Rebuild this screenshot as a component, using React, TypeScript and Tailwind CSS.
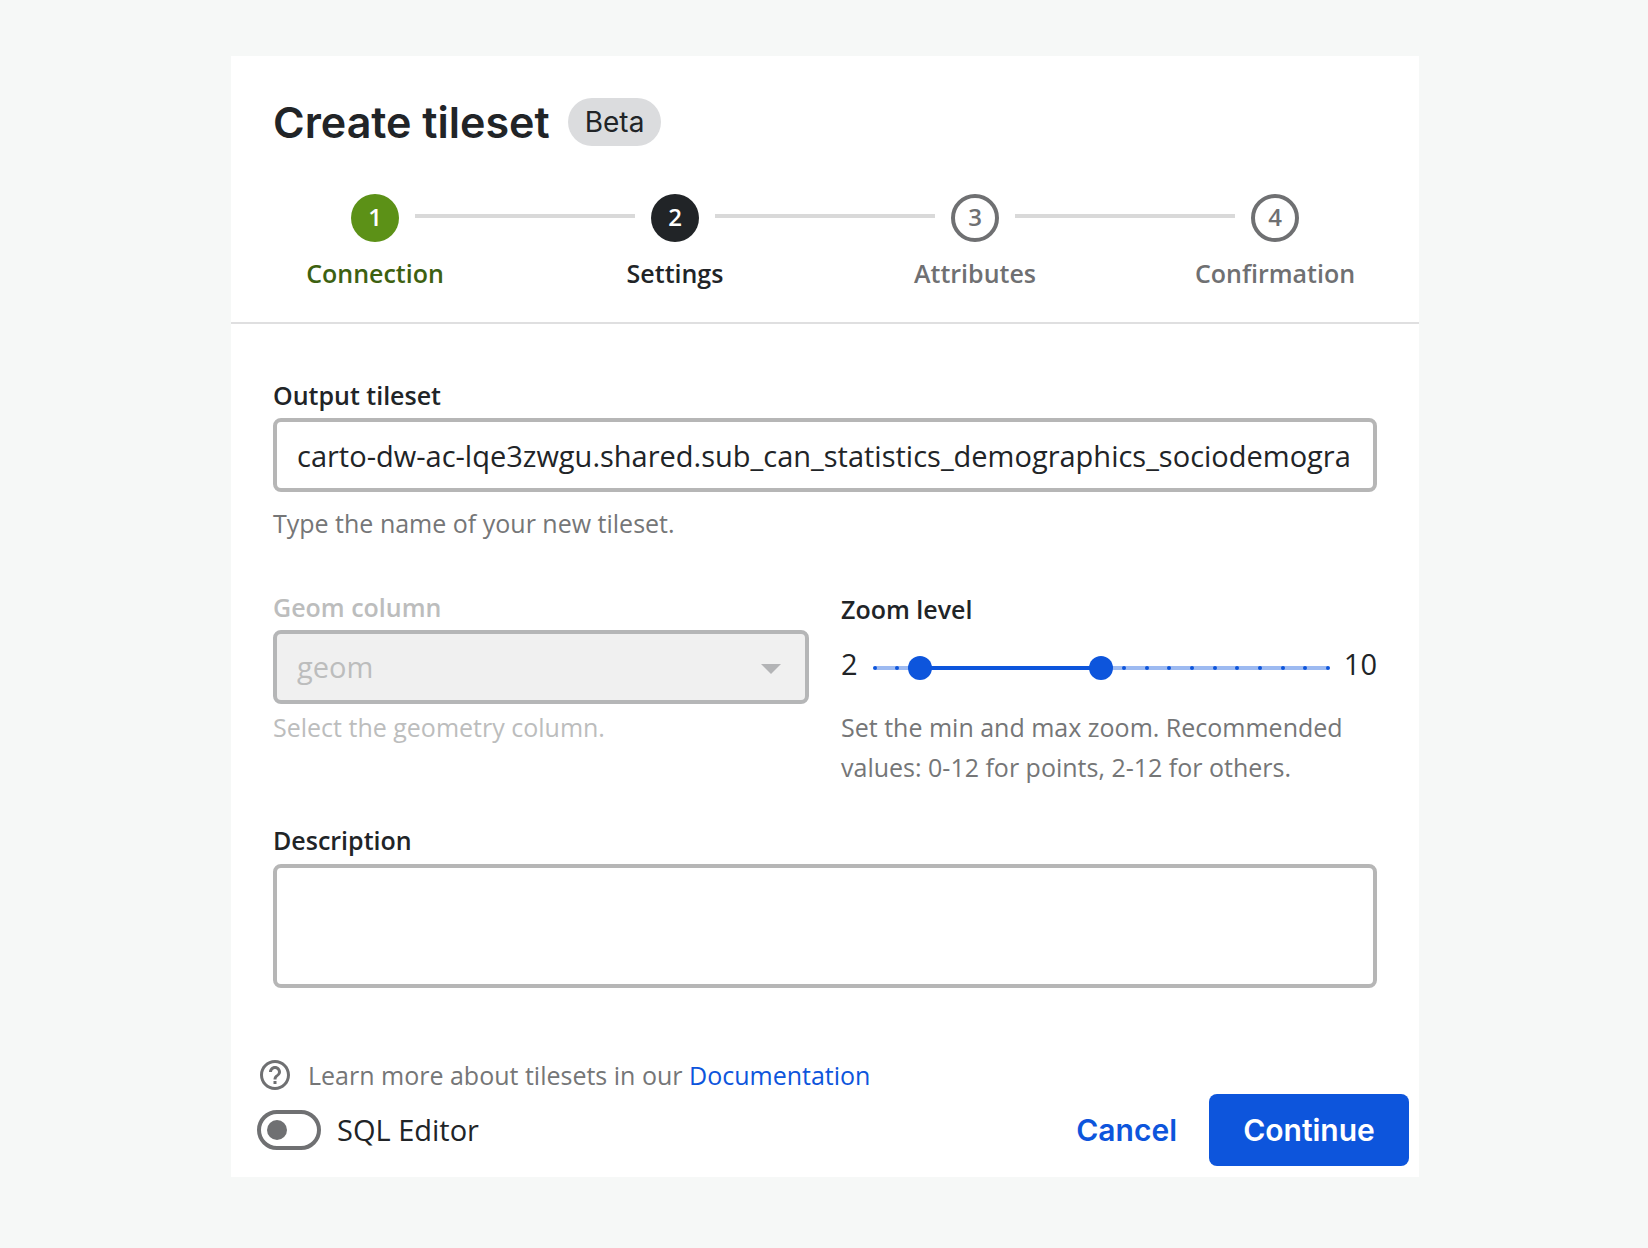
import { useState } from "react";

const steps = [
  { label: "Connection", state: "done" },
  { label: "Settings", state: "active" },
  { label: "Attributes", state: "todo" },
  { label: "Confirmation", state: "todo" },
];

const circleStyle: Record<string, string> = {
  done: "bg-[#5c9117] text-white",
  active: "bg-[#212427] text-white",
  todo: "border-4 border-[#6f7072] text-[#6f7072]",
};

const labelStyle: Record<string, string> = {
  done: "text-[#3d6110]",
  active: "text-[#212427]",
  todo: "text-[#6f7072]",
};

function Stepper() {
  return (
    <ol className="-mx-12 flex">
      {steps.map((step, i) => (
        <li
          key={step.label}
          aria-current={step.state === "active" ? "step" : undefined}
          className="relative flex flex-1 flex-col items-center"
        >
          {i > 0 && (
            <span className="absolute top-5 right-[calc(50%+40px)] left-[calc(-50%+40px)] h-1 bg-[#d9d9d9]" />
          )}
          <span
            className={`flex size-12 items-center justify-center rounded-full pb-0.5 text-2xl font-semibold ${circleStyle[step.state]}`}
          >
            {i + 1}
          </span>
          <span className={`mt-[11px] text-[25px] leading-10 font-semibold ${labelStyle[step.state]}`}>
            {step.label}
          </span>
        </li>
      ))}
    </ol>
  );
}

const rangeInput =
  "pointer-events-none absolute -inset-x-3 top-0 h-6 w-[calc(100%+24px)] appearance-none bg-transparent outline-none [&::-webkit-slider-thumb]:pointer-events-auto [&::-webkit-slider-thumb]:size-6 [&::-webkit-slider-thumb]:appearance-none [&::-webkit-slider-thumb]:rounded-full [&::-webkit-slider-thumb]:bg-[#0d55dc]";

function ZoomSlider() {
  const total = 20;
  const [min, setMin] = useState(2);
  const [max, setMax] = useState(10);
  const ticks = Array.from({ length: total + 1 }, (_, i) => i);
  return (
    <div className="relative h-6 flex-1">
      <div className="absolute inset-x-0 top-[10px] h-1 bg-[#9dbaf1]" />
      <div
        className="absolute top-[10px] h-1 bg-[#0d55dc]"
        style={{ left: `${(min / total) * 100}%`, right: `${100 - (max / total) * 100}%` }}
      />
      {ticks.map((t) => (
        <span
          key={t}
          className="absolute top-[10px] -ml-[2px] size-1 rounded-full bg-[#0d55dc]"
          style={{ left: `${(t / total) * 100}%` }}
        />
      ))}
      <input
        type="range"
        aria-label="Minimum zoom"
        min={0}
        max={total}
        value={min}
        onChange={(e) => setMin(Math.min(Number(e.target.value), max))}
        className={rangeInput}
      />
      <input
        type="range"
        aria-label="Maximum zoom"
        min={0}
        max={total}
        value={max}
        onChange={(e) => setMax(Math.max(Number(e.target.value), min))}
        className={rangeInput}
      />
    </div>
  );
}

export default function App() {
  const [name, setName] = useState(
    "carto-dw-ac-lqe3zwgu.shared.sub_can_statistics_demographics_sociodemogra"
  );
  const [sql, setSql] = useState(false);

  return (
    <div className="grid min-h-screen grid-cols-[231fr_1188fr_229fr] items-start bg-[#f6f8f7] py-14 font-['Open_Sans',sans-serif] text-[#212427]">
      <main className="col-start-2 bg-white">
        <header className="border-b-2 border-[#dfdfe0] px-[42px] pt-[42px] pb-[29px]">
          <div className="flex items-center gap-[18px] font-['Inter',sans-serif]">
            <h1 className="text-[43px] leading-12 font-semibold">Create tileset</h1>
            <span className="flex h-12 items-center rounded-full bg-[#dbdcde] px-[17px] text-[28px] leading-10">
              Beta
            </span>
          </div>
          <div className="mt-12">
            <Stepper />
          </div>
        </header>

        <form className="px-[42px] pt-[51px]" onSubmit={(e) => e.preventDefault()}>
          <div className="flex flex-col">
            <label htmlFor="output" className="text-[25px] leading-10 font-semibold">
              Output tileset
            </label>
            <input
              id="output"
              type="text"
              value={name}
              onChange={(e) => setName(e.target.value)}
              className="mt-[3px] h-[74px] w-full rounded-lg border-4 border-[#b6b6b6] px-5 text-[29px]"
            />
            <p className="mt-[11px] text-[25px] leading-10 text-[#757677]">
              Type the name of your new tileset.
            </p>
          </div>

          <div className="mt-[46px] grid grid-cols-2 gap-8">
            <div className="flex flex-col">
              <label htmlFor="geom" className="text-[25px] leading-9 font-semibold text-[#bcbdbd]">
                Geom column
              </label>
              <div className="relative mt-[5px]">
                <select
                  id="geom"
                  disabled
                  className="block h-[74px] w-full appearance-none rounded-lg border-4 border-[#b5b6b7] bg-[#f0f0f0] px-5 text-[29px] text-[#bcbdbd] opacity-100"
                >
                  <option>geom</option>
                </select>
                <svg
                  viewBox="0 0 20 10"
                  className="pointer-events-none absolute top-[34px] right-7 h-[10px] w-5 fill-[#b3b4b6]"
                >
                  <path d="M0 0h20L10 10z" />
                </svg>
              </div>
              <p className="mt-[3px] text-[25px] leading-10 text-[#bcbdbd]">
                Select the geometry column.
              </p>
            </div>

            <div>
              <h2 className="text-[25px] leading-10 font-semibold">Zoom level</h2>
              <div className="flex h-[70px] items-center text-[29px]">
                <span>2</span>
                <div className="mt-2 flex flex-1 pr-4 pl-[17px]">
                  <ZoomSlider />
                </div>
                <span>10</span>
              </div>
              <p className="mt-2 text-[25px] leading-10 text-[#757677]">
                Set the min and max zoom. Recommended values: 0-12 for points, 2-12 for others.
              </p>
            </div>
          </div>

          <div className="mt-[33px] flex flex-col">
            <label htmlFor="description" className="text-[25px] leading-10 font-semibold">
              Description
            </label>
            <textarea
              id="description"
              className="mt-1 h-[124px] w-full resize-none rounded-lg border-4 border-[#b6b6b6] px-5 py-3 text-[29px]"
            />
          </div>
        </form>

        <footer className="mt-[67px] pr-[10px] pb-[11px] pl-[26px]">
          <div className="flex h-10 items-center pl-[3px] text-[#757677]">
            <svg viewBox="2 2 20 20" className="size-[30px] fill-[#6f7072]">
              <path d="M11 18h2v-2h-2v2zm1-16C6.480 2 2 6.480 2 12s4.480 10 10 10 10-4.480 10-10S17.520 2 12 2zm0 18c-4.410 0-8-3.590-8-8s3.590-8 8-8 8 3.590 8 8-3.590 8-8 8zm0-14c-2.210 0-4 1.790-4 4h2c0-1.100.9-2 2-2s2 .9 2 2c0 2-3 1.750-3 5h2c0-2.250 3-2.500 3-5 0-2.210-1.790-4-4-4z" />
            </svg>
            <p className="ml-[18px] text-[25px] leading-10">
              Learn more about tilesets in our{" "}
              <a href="#documentation" className="text-[#0d55dc]">
                Documentation
              </a>
            </p>
          </div>
          <div className="-mt-px flex items-center justify-between">
            <label className="flex items-center gap-4 text-[29px] leading-10">
              <input
                type="checkbox"
                role="switch"
                checked={sql}
                onChange={(e) => setSql(e.target.checked)}
                className="flex h-10 w-16 appearance-none items-center rounded-full border-4 border-[#6f7072] px-[6px] before:size-5 before:rounded-full before:bg-[#6f7072] checked:justify-end"
              />
              SQL Editor
            </label>
            <div className="flex items-center font-['Inter',sans-serif] text-[30px] leading-10 font-semibold">
              <button type="button" className="h-[72px] px-8 text-[#0d55dc]">
                Cancel
              </button>
              <button
                type="submit"
                className="h-[72px] w-[200px] rounded-lg bg-[#0d55dc] text-white"
              >
                Continue
              </button>
            </div>
          </div>
        </footer>
      </main>
    </div>
  );
}
